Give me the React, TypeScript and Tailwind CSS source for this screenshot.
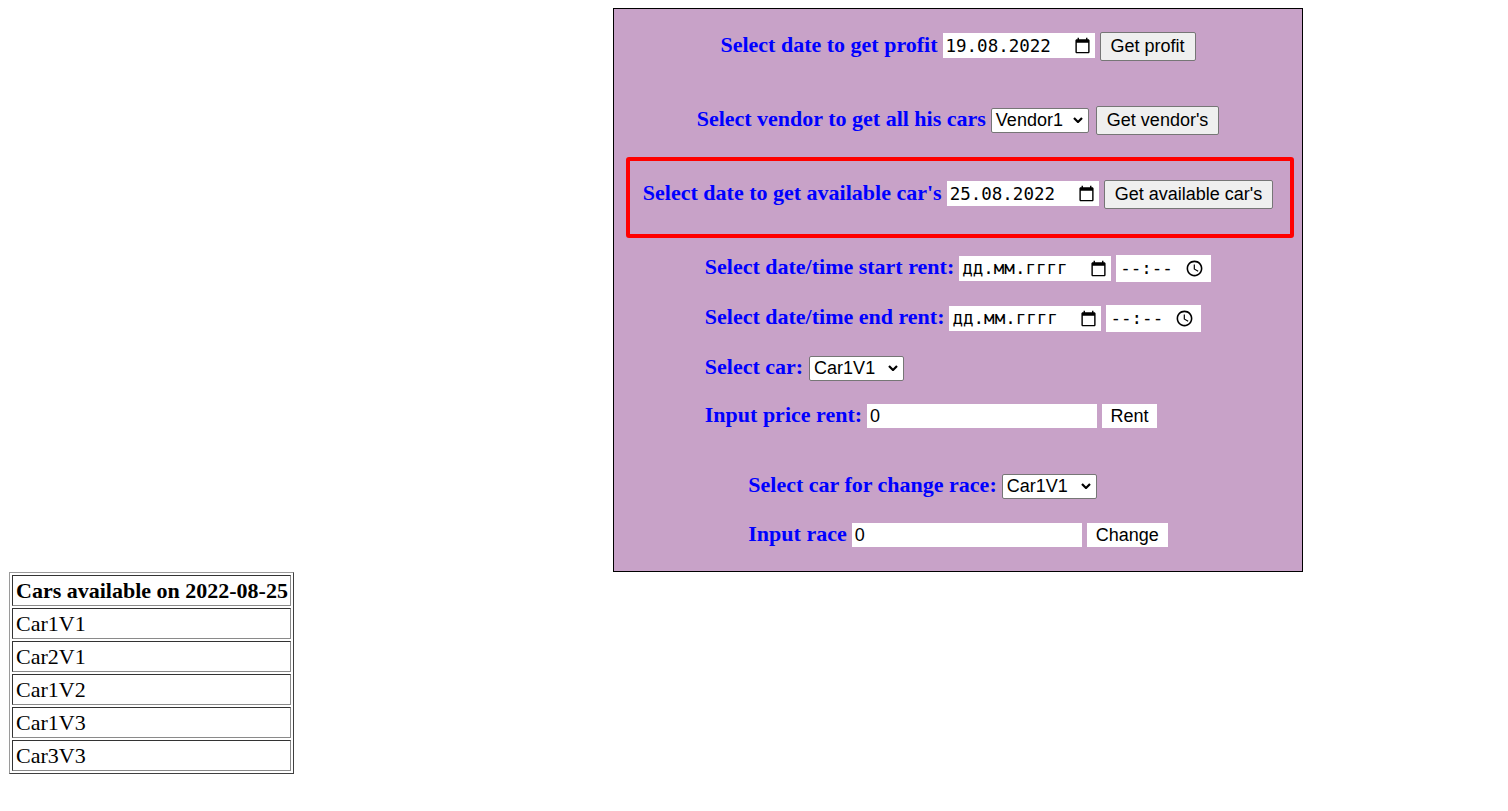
import React from "react";

function CalendarIcon() {
  return (
    <svg viewBox="0 0 24 24" className="h-[17px] w-[17px] shrink-0" fill="#000">
      <path d="M20 3h-1V1h-2v2H7V1H5v2H4c-1.1 0-2 .9-2 2v16c0 1.1.9 2 2 2h16c1.1 0 2-.9 2-2V5c0-1.1-.9-2-2-2zm0 18H4V8h16v13z" />
    </svg>
  );
}

function ClockIcon() {
  return (
    <svg viewBox="0 0 24 24" className="h-[19px] w-[19px] shrink-0" fill="#000">
      <path d="M11.99 2C6.47 2 2 6.48 2 12s4.47 10 9.99 10C17.52 22 22 17.52 22 12S17.52 2 11.99 2zM12 20c-4.42 0-8-3.58-8-8s3.58-8 8-8 8 3.58 8 8-3.58 8-8 8zm.5-13H11v6l5.25 3.15.75-1.23-4.5-2.67z" />
    </svg>
  );
}

function Chevron() {
  return (
    <svg viewBox="0 0 10 6" className="h-[6px] w-[10px] shrink-0" fill="none" stroke="#000" strokeWidth="2.2">
      <polyline points="1,1 5,5 9,1" />
    </svg>
  );
}

function Label({ children }: { children: React.ReactNode }) {
  return (
    <span className="font-['Liberation_Serif','Times_New_Roman',serif] text-[22px] font-bold leading-[25px] text-[#0000ff] whitespace-nowrap">
      {children}
    </span>
  );
}

function DateInput({ value }: { value: string }) {
  return (
    <div className="flex h-[25px] w-[152px] items-center justify-between bg-white pl-[3px] pr-[4px] font-['DejaVu_Sans_Mono','Liberation_Mono',monospace] text-[17.5px] text-black">
      <span className="leading-[20px]">{value}</span>
      <CalendarIcon />
    </div>
  );
}

function TimeInput() {
  return (
    <div className="flex h-[27px] w-[95px] items-center justify-between bg-white pl-[4px] pr-[7px] font-['DejaVu_Sans_Mono','Liberation_Mono',monospace] text-[17.5px] text-black">
      <span className="leading-[20px]">--:--</span>
      <ClockIcon />
    </div>
  );
}

function Select({ value, w }: { value: string; w: string }) {
  return (
    <div
      className={
        "flex h-[25px] items-center justify-between rounded-[2px] border border-[#767676] bg-white pl-[4px] pr-[5px] font-['Liberation_Sans',Arial,sans-serif] text-[18px] text-black " +
        w
      }
    >
      <span className="leading-[21px]">{value}</span>
      <Chevron />
    </div>
  );
}

function GrayButton({ children }: { children: React.ReactNode }) {
  return (
    <div className="rounded-[2px] border border-[#767676] bg-[#efefef] px-[10px] py-[3px] font-['Liberation_Sans',Arial,sans-serif] text-[18px] leading-[21px] text-black whitespace-nowrap">
      {children}
    </div>
  );
}

function WhiteButton({ children, w }: { children: React.ReactNode; w: string }) {
  return (
    <div
      className={
        "h-[24px] bg-white text-center font-['Liberation_Sans',Arial,sans-serif] text-[18px] leading-[24px] text-black " +
        w
      }
    >
      {children}
    </div>
  );
}

function TextInput({ value }: { value: string }) {
  return (
    <div className="h-[24px] w-[230px] bg-white pl-[3px] font-['Liberation_Sans',Arial,sans-serif] text-[18px] leading-[24px] text-black">
      {value}
    </div>
  );
}

const cars = ["Car1V1", "Car2V1", "Car1V2", "Car1V3", "Car3V3"];

export default function App() {
  return (
    <div className="flex min-h-[811px] w-full flex-col bg-white">
      <div className="ml-[613px] mt-[8px] flex h-[564px] w-[690px] flex-col border border-black bg-[#c8a2c8]">
        {/* Row 1 */}
        <div className="mt-[22px] flex h-[30px] items-center justify-center">
          <div className="flex items-baseline gap-[5px]">
            <Label>Select date to get profit</Label>
            <DateInput value="19.08.2022" />
            <GrayButton>Get profit</GrayButton>
          </div>
        </div>

        {/* Row 2 */}
        <div className="mt-[44px] flex h-[30px] items-center justify-center">
          <div className="flex items-baseline gap-[5px]">
            <Label>Select vendor to get all his cars</Label>
            <Select value="Vendor1" w="w-[98px]" />
            <div className="ml-[2px]">
              <GrayButton>Get vendor's</GrayButton>
            </div>
          </div>
        </div>

        {/* Row 3 highlighted */}
        <div className="ml-[12px] mr-[8px] mt-[22px] h-[81px] rounded-[3px] border-[4px] border-[#ff0000] pb-[23px] pr-[4px] pt-[18px]">
          <div className="flex h-[30px] items-center justify-center">
            <div className="flex items-baseline gap-[5px]">
              <Label>Select date to get available car's</Label>
              <DateInput value="25.08.2022" />
              <GrayButton>Get available car's</GrayButton>
            </div>
          </div>
        </div>

        {/* Rent block */}
        <div className="mx-auto mt-[15px] flex w-fit flex-col items-start">
          <div className="flex h-[30px] items-center">
            <div className="flex items-baseline gap-[5px]">
              <Label>Select date/time start rent:</Label>
              <DateInput value="дд.мм.гггг" />
              <TimeInput />
            </div>
          </div>
          <div className="mt-[20px] flex h-[30px] items-center">
            <div className="flex items-baseline gap-[5px]">
              <Label>Select date/time end rent:</Label>
              <DateInput value="дд.мм.гггг" />
              <TimeInput />
            </div>
          </div>
          <div className="mt-[19px] flex h-[30px] items-center">
            <div className="flex items-baseline gap-[6px]">
              <Label>Select car:</Label>
              <Select value="Car1V1" w="w-[95px]" />
            </div>
          </div>
          <div className="mt-[18px] flex h-[30px] items-center">
            <div className="flex items-baseline gap-[5px]">
              <Label>Input price rent:</Label>
              <TextInput value="0" />
              <WhiteButton w="w-[55px]">Rent</WhiteButton>
            </div>
          </div>
        </div>

        {/* Race block */}
        <div className="mx-auto mt-[40px] flex w-fit flex-col items-start">
          <div className="flex h-[30px] items-center">
            <div className="flex items-baseline gap-[5px]">
              <Label>Select car for change race:</Label>
              <Select value="Car1V1" w="w-[95px]" />
            </div>
          </div>
          <div className="mt-[19px] flex h-[30px] items-center">
            <div className="flex items-baseline gap-[5px]">
              <Label>Input race</Label>
              <TextInput value="0" />
              <WhiteButton w="w-[81px]">Change</WhiteButton>
            </div>
          </div>
        </div>
      </div>

      <table className="ml-[9px] w-fit border-separate border-spacing-[2px] border border-b-[#404040] border-l-[#9a9a9a] border-r-[#404040] border-t-[#9a9a9a] font-['Liberation_Serif','Times_New_Roman',serif] text-[22px] leading-[27px] text-black">
        <thead>
          <tr>
            <th className="border border-b-[#8a8a8a] border-l-[#333333] border-r-[#8a8a8a] border-t-[#333333] py-[1px] pl-[3px] pr-[2px] text-left font-bold whitespace-nowrap">
              Cars available on 2022-08-25
            </th>
          </tr>
        </thead>
        <tbody>
          {cars.map((c) => (
            <tr key={c}>
              <td className="border border-b-[#8a8a8a] border-l-[#333333] border-r-[#8a8a8a] border-t-[#333333] py-[1px] pl-[3px] pr-[2px] text-left">
                {c}
              </td>
            </tr>
          ))}
        </tbody>
      </table>
    </div>
  );
}
